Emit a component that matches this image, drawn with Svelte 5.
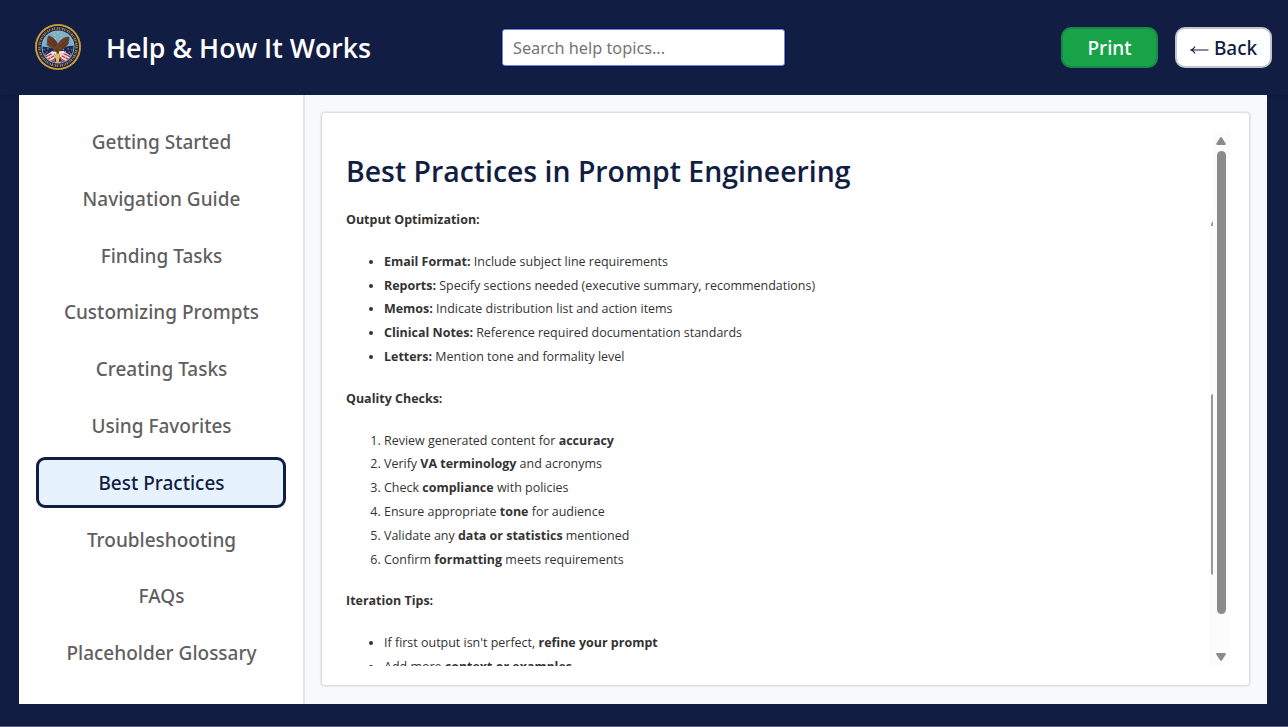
<script>
  const topics = [
    'Getting Started', 'Navigation Guide', 'Finding Tasks', 'Customizing Prompts',
    'Creating Tasks', 'Using Favorites', 'Best Practices', 'Troubleshooting',
    'FAQs', 'Placeholder Glossary'
  ];
  let active = $state('Best Practices');
  const stars = [[50, 20], [43, 24], [57, 24], [44, 32], [56, 32]];
  const field = [[20, 56], [26, 61], [22, 65], [29, 67], [33, 73], [80, 56], [74, 61], [78, 65], [71, 67], [67, 73], [28, 54], [72, 54], [62, 55], [66, 60]];
</script>

<div class="page">
  <header>
    <svg class="seal" viewBox="0 0 100 100" aria-label="Department of Veterans Affairs seal">
      <defs>
        <clipPath id="disc"><circle cx="50" cy="50" r="34" /></clipPath>
      </defs>
      <circle cx="50" cy="50" r="50" fill="#dcae3c" />
      <circle cx="50" cy="50" r="48.5" fill="none" stroke="#80602a" stroke-width="1.6" stroke-dasharray="2 2" />
      <circle cx="50" cy="50" r="46" fill="#171c3f" />
      <circle cx="50" cy="50" r="40.5" fill="none" stroke="#9b8a5c" stroke-width="5.5" stroke-dasharray="2.2 1.6 1.2 1.8 3 1.5" />
      <circle cx="50" cy="50" r="35.8" fill="#a9bbb9" />
      <g clip-path="url(#disc)">
        <rect width="100" height="100" fill="#74b1d7" />
        <path d="M16 49l22 3 12 8 12-10 22-3v20L72 82H28L16 70z" fill="#1e2856" />
        <path d="M20 70l17-11 11 8-7 13-14 1z" fill="#e5d5dc" />
        <path d="M80 70L63 60l-11 7 7 13 14 1z" fill="#e5d5dc" />
        <path d="M22 72l16-8M27 77l15-8M35 81l8-5M78 72l-16-8M73 77l-15-8M65 81l-8-5" stroke="#bf3d50" stroke-width="2.8" />
        <path d="M28 81q22 7 44 0v12H28z" fill="#83b9d7" />
        {#each field as [x, y]}<circle cx={x} cy={y} r="1.2" fill="#c9cfe5" />{/each}
      </g>
      {#each stars as [x, y]}<circle cx={x} cy={y} r="2.1" fill="#d5b95b" />{/each}
      <path d="M50 43C45 33 36 26 29 25c-3 6-4 12-2 18-2 0-3 0-4-1 4 7 10 10 17 11-1 6 1 13 6 17h7l5-14c9-4 14-10 17-18l-3 1c3-4 4-8 2-11C65 27 55 33 50 43z" fill="#6c4027" />
      <path d="M31 29l15 19M29 37l14 13M71 33L56 48M71 40L59 53M38 31l9 12M47 55l4 10" stroke="#46291b" stroke-width="1.8" />
      <path d="M37 59l-3 6 8-1 4 5 1-8zM62 58l5 6-9-1-5 5-1-8z" fill="#eee8e4" />
      <path d="M47 64l6 0 1 7-3 13h-4l-3-13z" fill="#e7bd4c" />
      <path d="M43 73l-1 12M56 72l2 13" stroke="#ca4655" stroke-width="2" />
    </svg>
    <div class="title">Help &amp; How It Works</div>
    <input type="text" placeholder="Search help topics..." />
    <div class="actions">
      <button class="print">Print</button>
      <button class="back">
        <svg viewBox="0 0 19 10" width="19" height="10"><path d="M1 5H18.5M5 1.5Q4 4 1 5Q4 6 5 8.5" fill="none" stroke="currentColor" stroke-width="1.1" /></svg>
        Back
      </button>
    </div>
  </header>

  <main>
    <nav>
      {#each topics as topic}
        <button class:active={active === topic} onclick={() => (active = topic)}>{topic}</button>
      {/each}
    </nav>
    <section>
      <article>
        <div class="text">
          <h1>Best Practices in Prompt Engineering</h1>
          <p><b>Output Optimization:</b></p>
          <ul>
            <li><b>Email Format:</b> Include subject line requirements</li>
            <li><b>Reports:</b> Specify sections needed (executive summary, recommendations)</li>
            <li><b>Memos:</b> Indicate distribution list and action items</li>
            <li><b>Clinical Notes:</b> Reference required documentation standards</li>
            <li><b>Letters:</b> Mention tone and formality level</li>
          </ul>
          <p><b>Quality Checks:</b></p>
          <ol>
            <li>Review generated content for <b>accuracy</b></li>
            <li>Verify <b>VA terminology</b> and acronyms</li>
            <li>Check <b>compliance</b> with policies</li>
            <li>Ensure appropriate <b>tone</b> for audience</li>
            <li>Validate any <b>data or statistics</b> mentioned</li>
            <li>Confirm <b>formatting</b> meets requirements</li>
          </ol>
          <p><b>Iteration Tips:</b></p>
          <ul>
            <li>If first output isn't perfect, <b>refine your prompt</b></li>
            <li>Add more <b>context or examples</b></li>
          </ul>
        </div>
        <div class="inner-bar"><i></i><span></span></div>
        <div class="outer-bar">
          <svg viewBox="0 0 12 10" width="12" height="10"><path d="M5 1.7Q6 .3 7 1.7L10.7 7.6Q11 9 10 9H2Q1 9 1.3 7.6Z" fill="#8b8b8b" /></svg>
          <div class="thumb"></div>
          <svg class="down" viewBox="0 0 12 10" width="12" height="10"><path d="M5 8.3Q6 9.7 7 8.3L10.7 2.4Q11 1 10 1H2Q1 1 1.3 2.4Z" fill="#8b8b8b" /></svg>
        </div>
      </article>
    </section>
  </main>
</div>

<style>
  :global(body) { background: #111d42; }
  * { box-sizing: border-box; }
  .page {
    height: 727px;
    overflow: hidden;
    background: #111d42;
    font-family: "Open Sans", "Noto Sans", sans-serif;
    border-bottom: 1px solid #5d607f;
  }
  button, input { font-family: "Noto Sans", sans-serif; }
  header {
    height: 95px;
    padding: 0 16px 0 35px;
    display: grid;
    grid-template-columns: 71px 396px 283px 1fr;
    align-items: center;
    box-shadow: 0 1px 3px rgba(0, 0, 0, .2);
  }
  .seal { width: 46px; height: 46px; margin-bottom: 1px; }
  .title {
    color: #fff;
    font-size: 26.7px;
    font-weight: 600;
    line-height: 36px;
    white-space: nowrap;
  }
  input {
    width: 283px;
    height: 37px;
    border: 1px solid #7b84c0;
    border-radius: 3px;
    box-shadow: 0 0 0 1px #03136c;
    background: #fff;
    padding: 0 10px;
    font-size: 16.3px;
    outline: 0;
  }
  input::placeholder { color: #757575; }
  .actions { display: flex; gap: 17px; justify-content: flex-end; }
  .actions button {
    width: 97px;
    height: 41px;
    border-radius: 10px;
    font-size: 19px;
    font-weight: 500;
    padding: 0;
    display: flex;
    align-items: center;
    justify-content: center;
  }
  .print { background: #18a349; border: 2px solid #178a45; color: #fff; }
  .back { background: #fff; border: 2px solid #c3c5cd; color: #111d42; gap: 5px; }
  .back svg { margin-top: 5px; }
  main {
    height: 609px;
    margin: 0 21px 0 19px;
    display: grid;
    grid-template-columns: 286px 1fr;
    background: #f8f9fb;
  }
  nav {
    background: #fff;
    border-right: 2px solid #e3e4e8;
    padding: 21.5px 17px 0 17px;
    display: flex;
    flex-direction: column;
    gap: 5.8px;
  }
  nav button {
    height: 51px;
    flex: none;
    border: 3px solid transparent;
    border-radius: 9px;
    background: none;
    color: #5f5f5f;
    font-size: 19px;
    font-weight: 500;
    padding: 0 0 0 1px;
    white-space: nowrap;
  }
  nav button.active { background: #e6f3ff; border-color: #111d42; color: #111d42; }
  section { padding: 17px 19px 18px 16px; }
  article {
    height: 574px;
    border: 1px solid #dcdee2;
    border-radius: 4px;
    background: #fff;
    box-shadow: 0 0 1px 1px rgba(60, 65, 85, .08);
    display: grid;
    grid-template-columns: 863px 4px 17px;
    padding: 19px 19px 19px 24px;
    color: #333;
    font-size: 12.47px;
    line-height: 23.8px;
  }
  .text { height: 534px; overflow: hidden; }
  h1 {
    margin: 21px 0 19px;
    color: #111d42;
    font-size: 28.4px;
    font-weight: 600;
    line-height: 36px;
  }
  p { margin: 0; }
  ul, ol { margin: 18px 0; padding-left: 38px; }
  .inner-bar {
    height: 453px;
    margin-top: 81px;
    background: #fcfcfc;
    display: flex;
    flex-direction: column;
    align-items: flex-end;
  }
  .inner-bar i {
    width: 2px;
    height: 5px;
    margin-top: 8px;
    background: #9a9a9a;
    clip-path: polygon(100% 0, 100% 100%, 0 100%, 0 55%);
  }
  .inner-bar span {
    width: 2px;
    height: 181px;
    margin-top: 168px;
    border-radius: 2px 0 0 2px;
    background: #999;
  }
  .outer-bar {
    height: 534px;
    background: #fcfcfc;
    padding: 4px 1px 4px 0;
    display: flex;
    flex-direction: column;
    align-items: center;
  }
  .thumb { width: 9px; height: 463px; margin-top: 5px; border-radius: 5px; background: #8b8b8b; }
  .down { margin-top: auto; }
</style>
